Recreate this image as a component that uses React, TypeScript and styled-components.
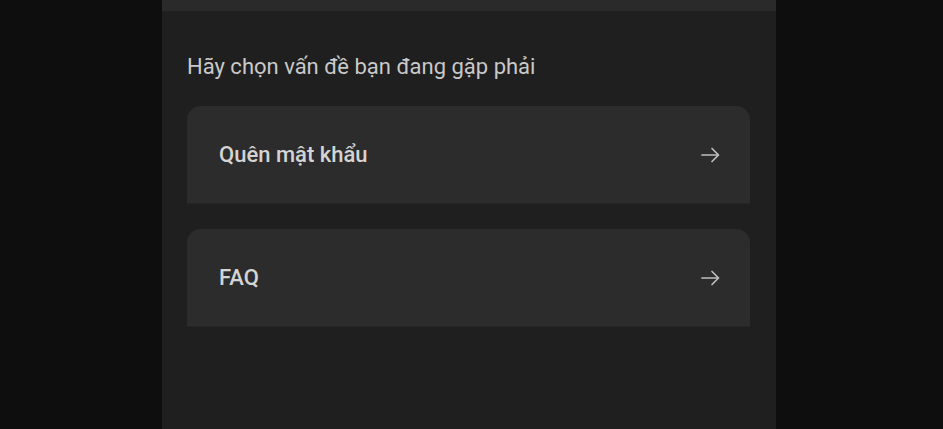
import styled, { createGlobalStyle } from "styled-components";

const GlobalStyle = createGlobalStyle`
  html, body {
    margin: 0;
    padding: 0;
    background: #0e0e0e;
  }
  body {
    font-family: Roboto, "Noto Sans", "Liberation Sans", sans-serif;
  }
`;

const Page = styled.div`
  display: flex;
  padding-left: 162px;
  height: 429px;
  overflow: hidden;
  background: #0e0e0e;
`;

const Panel = styled.div`
  width: 614px;
  display: flex;
  flex-direction: column;
  background: #1f1f1f;
`;

const TopBar = styled.div`
  height: 11px;
  background: #2a2a2a;
`;

const Content = styled.div`
  padding: 43px 26px 0 25px;
  display: flex;
  flex-direction: column;
`;

const Title = styled.h2`
  margin: 0 0 26px;
  font-size: 22px;
  line-height: 26px;
  font-weight: 400;
  color: #c9c9c9;
`;

const List = styled.div`
  display: flex;
  flex-direction: column;
  gap: 26px;
`;

const Card = styled.div`
  height: 97px;
  display: flex;
  align-items: center;
  justify-content: space-between;
  padding: 0 30px 0 32px;
  background: #2c2c2c;
  border-radius: 14px 14px 0 0;
  box-shadow: 0 1px 0 #262626;
`;

const Label = styled.span`
  font-size: 22px;
  font-weight: 500;
  color: #d4d4d4;
`;

const Arrow = () => (
  <svg width="19" height="16" viewBox="0 0 19 16" fill="none">
    <path
      d="M1 8h16.5M11 1.5 17.5 8 11 14.5"
      stroke="#bdbdbd"
      strokeWidth="1.7"
      strokeLinecap="round"
      strokeLinejoin="round"
    />
  </svg>
);

const items = ["Quên mật khẩu", "FAQ"];

const App = () => {
  return (
    <>
      <GlobalStyle />
      <Page>
        <Panel>
          <TopBar />
          <Content>
            <Title>Hãy chọn vấn đề bạn đang gặp phải</Title>
            <List>
              {items.map((item) => (
                <Card key={item}>
                  <Label>{item}</Label>
                  <Arrow />
                </Card>
              ))}
            </List>
          </Content>
        </Panel>
      </Page>
    </>
  );
};

export default App;
